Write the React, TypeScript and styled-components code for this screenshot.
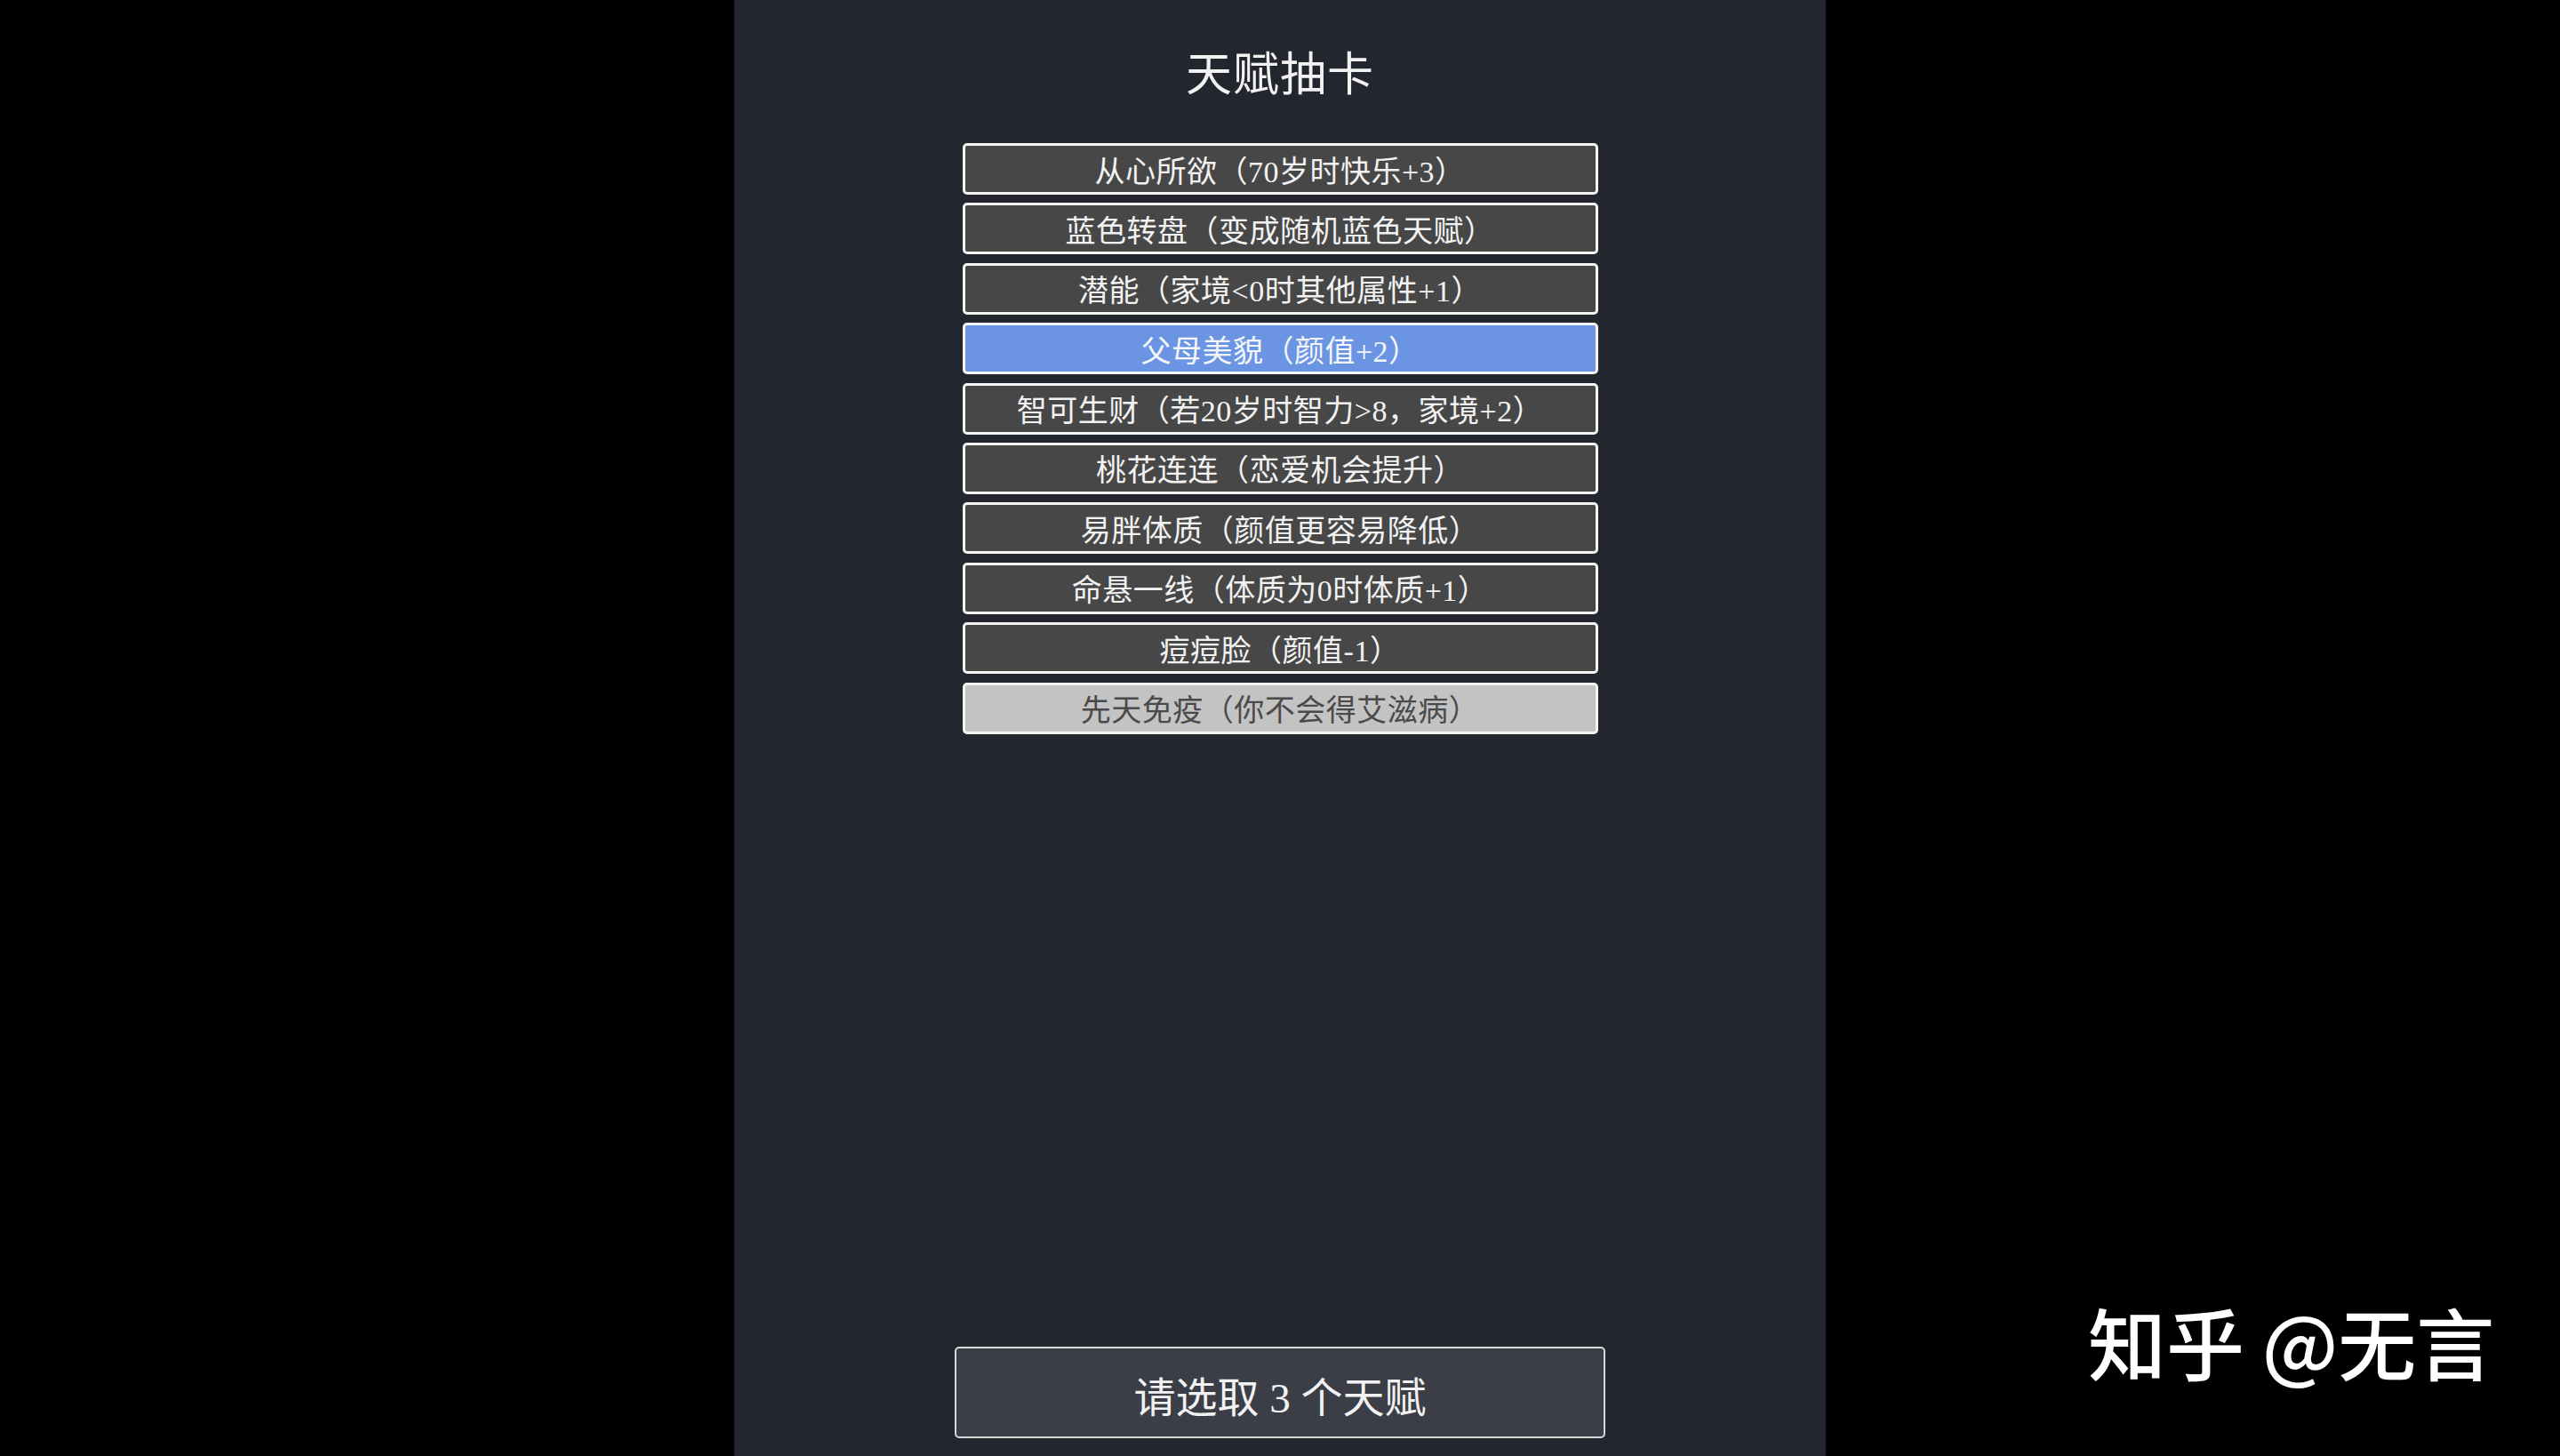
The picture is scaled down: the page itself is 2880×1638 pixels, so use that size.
import React from "react";
import styled, { createGlobalStyle, css } from "styled-components";

type Variant = "normal" | "selected" | "disabled";

const talents: { label: string; variant: Variant }[] = [
  { label: "从心所欲（70岁时快乐+3）", variant: "normal" },
  { label: "蓝色转盘（变成随机蓝色天赋）", variant: "normal" },
  { label: "潜能（家境<0时其他属性+1）", variant: "normal" },
  { label: "父母美貌（颜值+2）", variant: "selected" },
  { label: "智可生财（若20岁时智力>8，家境+2）", variant: "normal" },
  { label: "桃花连连（恋爱机会提升）", variant: "normal" },
  { label: "易胖体质（颜值更容易降低）", variant: "normal" },
  { label: "命悬一线（体质为0时体质+1）", variant: "normal" },
  { label: "痘痘脸（颜值-1）", variant: "normal" },
  { label: "先天免疫（你不会得艾滋病）", variant: "disabled" },
];

const App = () => {
  return (
    <>
      <GlobalStyle />
      <Stage>
        <Panel>
          <Title>天赋抽卡</Title>
          <TalentList>
            {talents.map((t) => (
              <TalentButton key={t.label} $variant={t.variant}>
                {t.label}
              </TalentButton>
            ))}
          </TalentList>
          <Spacer />
          <ConfirmButton>请选取 3 个天赋</ConfirmButton>
        </Panel>
        <Watermark>知乎 @无言</Watermark>
      </Stage>
    </>
  );
};

export default App;

const GlobalStyle = createGlobalStyle`
  html, body {
    margin: 0;
    padding: 0;
    background: #000;
  }
  * {
    box-sizing: border-box;
  }
`;

const Stage = styled.div`
  position: relative;
  width: 100%;
  height: 100vh;
  background: #000;
  overflow: hidden;
`;

const Panel = styled.div`
  width: 1228px;
  height: 100%;
  margin: 0 auto;
  background: #23262f;
  display: flex;
  flex-direction: column;
  align-items: center;
  font-family: "Liberation Serif", "Noto Sans CJK SC", serif;
  color: #f2f2f2;
`;

const Title = styled.h1`
  margin: 54px 0 0;
  font-size: 52px;
  font-weight: 400;
  line-height: 62px;
  letter-spacing: 1px;
`;

const TalentList = styled.div`
  margin-top: 45px;
  width: 715px;
  display: flex;
  flex-direction: column;
  gap: 9.4px;
`;

const variants = {
  normal: css`
    background: #474747;
    color: #f2f2f2;
  `,
  selected: css`
    background: #6b95e3;
    color: #f4f6fb;
  `,
  disabled: css`
    background: #c3c3c3;
    color: #4a4a4a;
  `,
};

const TalentButton = styled.div<{ $variant: Variant }>`
  height: 58px;
  border: 3px solid #f4f4f4;
  border-radius: 5px;
  display: flex;
  align-items: center;
  justify-content: center;
  font-size: 34px;
  letter-spacing: 0.5px;
  white-space: nowrap;
  ${({ $variant }) => variants[$variant]}
`;

const Spacer = styled.div`
  flex: 1;
`;

const ConfirmButton = styled.div`
  width: 732px;
  height: 103px;
  margin-bottom: 20px;
  background: #3b3e46;
  border: 2px solid #d8d8d8;
  border-radius: 5px;
  display: flex;
  align-items: center;
  justify-content: center;
  padding-top: 4px;
  font-size: 47px;
  color: #f2f2f2;
`;

const Watermark = styled.div`
  position: absolute;
  left: 2349px;
  top: 1464px;
  font-family: "Noto Sans CJK SC", "Noto Sans", sans-serif;
  font-size: 88px;
  font-weight: 500;
  line-height: 1;
  color: #fff;
  white-space: nowrap;
`;
